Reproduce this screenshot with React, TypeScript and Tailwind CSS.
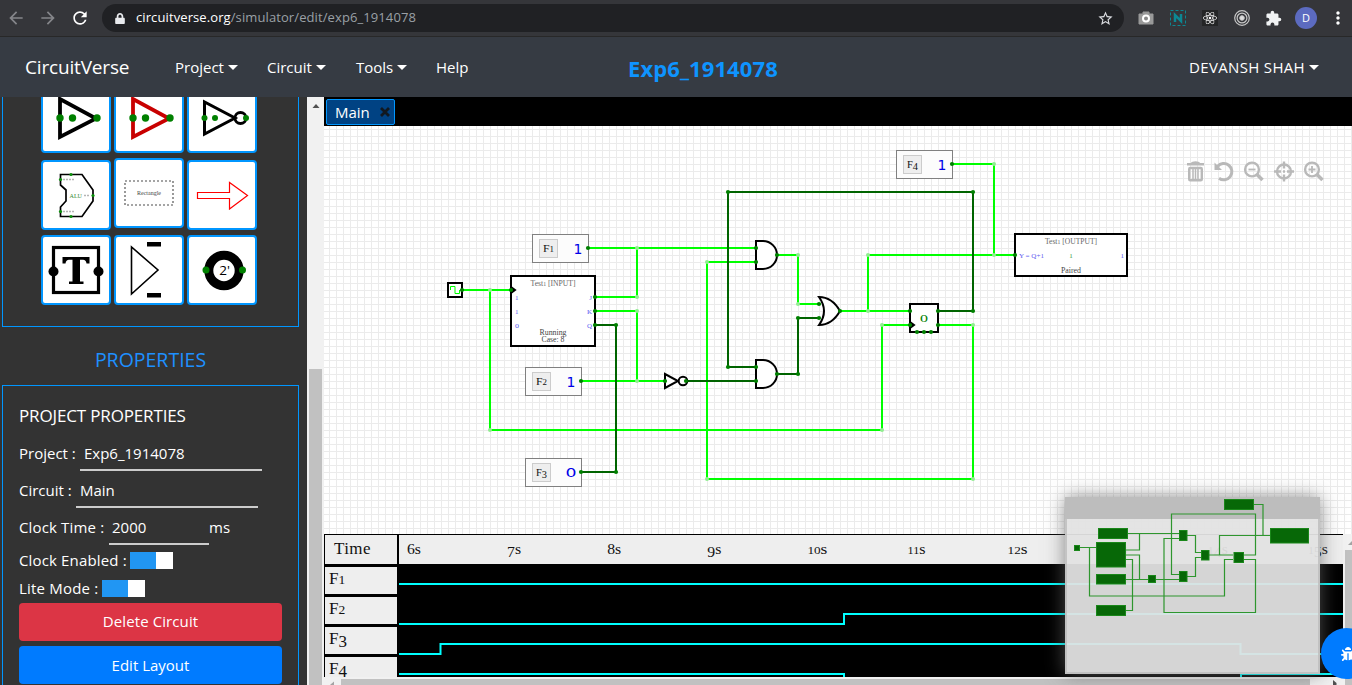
import React from "react";
import { FaBug, FaLock, FaReact } from "react-icons/fa";
import { MdArrowBack, MdArrowForward, MdExtension, MdRefresh, MdStarBorder, MdMoreVert } from "react-icons/md";

const SMALL = "012";
const LOW = "34579";

/* Old-style figures for SVG text: 0-2 at x-height, 3/4/5/7/9 below the baseline. */
function Num({ x, y, size, text, fill = "#111", width, anchor = "start" }: {
  x: number; y: number; size: number; text: string; fill?: string; width?: number; anchor?: "start" | "middle" | "end";
}) {
  let shift = 0;
  return (
    <text x={x} y={y} fontSize={size} fill={fill} textAnchor={anchor} textLength={width} lengthAdjust="spacingAndGlyphs" className="font-['Liberation_Serif',serif]">
      {text.split("").map((c, i) => {
        const want = LOW.includes(c) ? size * 0.2 : 0;
        const dy = want - shift;
        shift = want;
        return <tspan key={i} dy={dy} fontSize={SMALL.includes(c) ? size * 0.76 : size}>{c}</tspan>;
      })}
    </text>
  );
}

const HIGH = "#00ff00";
const OFF = "#006400";

const wires: [string, string][] = [
  [HIGH, "M588 248H756"], [HIGH, "M637 248V297H595"], [HIGH, "M462 290H512"],
  [HIGH, "M490 290V430H882V325H910"], [HIGH, "M595 311H637V381"], [HIGH, "M581 381H665"],
  [HIGH, "M756 262H707V479H973V325H938"], [HIGH, "M777 255H798V304H819"],
  [HIGH, "M840 311H910"], [HIGH, "M868 311V255H1015"], [HIGH, "M952 164H994V255"],
  [OFF, "M595 325H616V472H581"], [OFF, "M686 381H756"], [OFF, "M756 367H728V192H973V311H938"],
  [OFF, "M777 374H798V318H819"],
];
const lightDots = [[637, 248], [637, 297], [637, 311], [637, 381], [490, 290], [490, 430], [882, 430], [882, 325], [707, 262], [707, 479], [973, 479], [973, 325], [798, 255], [798, 304], [868, 311], [868, 255], [994, 255], [994, 164]];
const darkDots = [[588, 248], [462, 290], [511, 290], [595, 297], [595, 311], [595, 325], [616, 325], [616, 472], [581, 472], [581, 381], [665, 381], [686, 381], [756, 248], [756, 262], [777, 255], [756, 367], [756, 381], [777, 374], [798, 374], [798, 318], [819, 304], [819, 318], [840, 311], [728, 192], [728, 367], [973, 192], [973, 311], [910, 311], [910, 325], [938, 311], [938, 325], [952, 164], [1015, 255], [917, 332], [924, 332], [931, 332]];

function InputBox({ x, y, name, value }: { x: number; y: number; name: string; value: string }) {
  return (
    <g>
      <rect x={x + 0.5} y={y + 0.5} width="56" height="28" fill="#fcfcfc" stroke="#808080" />
      <rect x={x + 7.5} y={y + 5.5} width="18" height="18" fill="#eee" stroke="#ccc" />
      <Num x={x + 16.5} y={y + 18} size={10} text={name} anchor="middle" width={11} />
      {value === "1" ? (
        <text x={x + 46} y={y + 20} fontSize="14" textAnchor="middle" fill="#0000e8" className="font-['DejaVu_Sans',sans-serif]">1</text>
      ) : (
        <text x={x + 46} y={y + 19} fontSize="12.5" textAnchor="middle" fill="#0000e8" textLength="11" lengthAdjust="spacingAndGlyphs" className="font-['DejaVu_Sans',sans-serif]">0</text>
      )}
    </g>
  );
}

function Circuit() {
  return (
    <svg className="block h-[408px] w-[1028px]" viewBox="324 126 1028 408">
      <defs>
        <pattern id="grid" x="0" y="3" width="7" height="7" patternUnits="userSpaceOnUse">
          <path d="M0 .5H7M.5 0V7" stroke="#ebebeb" fill="none" />
        </pattern>
      </defs>
      <rect x="324" y="126" width="1028" height="408" fill="#fff" />
      <rect x="324" y="126" width="1028" height="408" fill="url(#grid)" />
      <InputBox x={532} y={234} name="F1" value="1" />
      <InputBox x={525} y={367} name="F2" value="1" />
      <InputBox x={525} y={458} name="F3" value="0" />
      <InputBox x={896} y={150} name="F4" value="1" />
      {wires.map(([c, d]) => <path key={d} d={d} stroke={c} strokeWidth="2" fill="none" />)}
      <g stroke="#000" strokeWidth="2" fill="#fff">
        <rect x="511" y="276" width="84" height="70" />
        <rect x="448" y="283" width="14" height="14" />
        <rect x="1015" y="234" width="112" height="42" />
        <path d="M756 241H763A14 14 0 0 1 763 269H756Z" />
        <path d="M756 360H763A14 14 0 0 1 763 388H756Z" />
        <path d="M819 297Q832 297 840 311Q832 325 819 325Q829 311 819 297Z" />
        <rect x="910" y="304" width="28" height="28" />
        <path d="M665 374V388L678 381Z" />
        <circle cx="683" cy="381" r="4.3" />
        <path d="M511 287L515 290L511 293M910 322L914 325L910 328" fill="#000" />
      </g>
      <path d="M450.500 290V286.500H455V293.500H459.500V290" stroke={HIGH} fill="none" />
      {lightDots.map(([x, y]) => <circle key={`${x}-${y}`} cx={x} cy={y} r="2" fill="#90ee90" />)}
      {darkDots.map(([x, y]) => <circle key={`${x}-${y}`} cx={x} cy={y} r="2.1" fill="#008000" />)}
      <Num x={553} y={286} size={7.6} text="Test1 [INPUT]" anchor="middle" fill="#666" width={45} />
      <text x="553" y="335" fontSize="7.6" textAnchor="middle" fill="#444" textLength="27" lengthAdjust="spacingAndGlyphs" className="font-['Liberation_Serif',serif]">Running</text>
      <text x="553" y="342" fontSize="7.6" textAnchor="middle" fill="#444" textLength="23" lengthAdjust="spacingAndGlyphs" className="font-['Liberation_Serif',serif]">Case: 8</text>
      <g fontSize="7" fill="#5a5af0" className="font-['Liberation_Serif',serif]">
        <text x="515" y="300">1</text><text x="515" y="314">1</text><text x="515" y="328" fontSize="6" textLength="4" lengthAdjust="spacingAndGlyphs">0</text>
        <text x="592" y="300" textAnchor="end">J</text><text x="592" y="314" textAnchor="end">K</text><text x="592" y="328" textAnchor="end">Q</text>
        <text x="1019" y="258" textLength="25" lengthAdjust="spacingAndGlyphs">Y = Q+1</text><text x="1124" y="258" textAnchor="end">1</text>
        <text x="1071" y="258" textAnchor="middle" fill="#449944">1</text>
      </g>
      <Num x={1071} y={244} size={7.6} text="Test1 [OUTPUT]" anchor="middle" fill="#666" width={52} />
      <text x="1071" y="273" fontSize="7.6" textAnchor="middle" fill="#444" textLength="20" lengthAdjust="spacingAndGlyphs" className="font-['Liberation_Serif',serif]">Paired</text>
      <text x="924" y="322" fontSize="10" textAnchor="middle" fill="#008000" textLength="8" lengthAdjust="spacingAndGlyphs" className="font-['Liberation_Serif',serif]">0</text>
      <g stroke="#b9b9b9" strokeWidth="2.4" fill="none">
        <path d="M1187 164.2H1204M1192 163.4Q1192.500 162.400 1195.500 162.400Q1198.500 162.400 1199 163.400" />
        <rect x="1189.200" y="168" width="12.600" height="12.200" rx="1" />
        <path d="M1193 169V180M1195.500 169V180M1198 169V180" strokeWidth="1.500" />
        <path d="M1217.500 166.500A8.100 8.100 0 1 1 1219 178.200" strokeWidth="3" />
        <path d="M1214.500 162.500V170H1222Z" fill="#b9b9b9" stroke="none" />
        <circle cx="1252" cy="169.500" r="6.900" /><path d="M1257.200 174.700L1262.500 180" strokeWidth="3.500" /><path d="M1248.500 169.500H1255.500" strokeWidth="1.800" />
        <circle cx="1284" cy="171.500" r="7" /><path d="M1274 171.500H1281M1287 171.500H1294M1284 161.500V168.500M1284 174.500V181.500M1283 171.500H1285" />
        <circle cx="1312" cy="169.500" r="6.900" /><path d="M1317.200 174.700L1322.500 180" strokeWidth="3.500" /><path d="M1308.500 169.500H1315.500M1312 166V173" strokeWidth="1.800" />
      </g>
    </svg>
  );
}

function Tile({ children, up }: { children: React.ReactNode; up?: boolean }) {
  return (
    <div className={`h-[70px] w-[70px] overflow-hidden rounded border-2 border-[#0096ff] bg-white ${up ? "-mt-[2px]" : ""}`}>
      <svg className="block h-[66px] w-[66px]" viewBox="0 0 66 66">{children}</svg>
    </div>
  );
}

function Palette() {
  return (
    <div className="mx-[2px] -mt-[15px] h-[245px] w-[297px] shrink-0 border border-[#0096ff] pl-[38px]">
      <div className="grid w-[216px] grid-cols-[70px_70px_70px] gap-x-[3px]">
        <div className="h-[76px]"><Tile>
          <path d="M17 14V52L53 33.500Z" fill="none" stroke="#000" strokeWidth="3.800" />
          <circle cx="17" cy="33" r="3.700" fill="#008000" /><circle cx="29.500" cy="33" r="3.700" fill="#008000" /><circle cx="54" cy="33" r="3.700" fill="#008000" />
        </Tile></div>
        <Tile>
          <path d="M17 14V52L53 33.500Z" fill="none" stroke="#c80000" strokeWidth="3.800" />
          <circle cx="17" cy="33" r="3.700" fill="#008000" /><circle cx="29.500" cy="33" r="3.700" fill="#008000" /><circle cx="54" cy="33" r="3.700" fill="#008000" />
        </Tile>
        <Tile>
          <path d="M15.500 17V49L46 33Z" fill="none" stroke="#000" strokeWidth="3" />
          <circle cx="51.500" cy="33" r="5.500" fill="none" stroke="#000" strokeWidth="2.800" />
          <circle cx="15.500" cy="33" r="3" fill="#008000" /><circle cx="26" cy="33" r="3" fill="#008000" /><circle cx="57" cy="33" r="3" fill="#008000" />
        </Tile>
        <div className="mt-[1px] h-[75px]"><Tile>
          <path d="M17.500 12.500H39L50 28V39L39 54.500H17.500V45L23 39V28L17.500 23Z" fill="none" stroke="#000" strokeWidth="1.700" />
          <text x="26.500" y="36" fontSize="6" fill="#338833" textLength="12.500" lengthAdjust="spacingAndGlyphs" className="font-['Liberation_Serif',serif]">ALU</text>
          <path d="M20 17.500H31M20 49.500H31M41 33.500H47" stroke="#b5b5b5" strokeWidth="1.300" strokeDasharray="2 1" />
          {[[28, 12.500], [17.500, 17.500], [50, 33.500], [17.500, 49.500], [28, 54.500]].map(([x, y]) => <circle key={`${x}${y}`} cx={x} cy={y} r="1.600" fill="#0a900a" />)}
        </Tile></div>
        <div className="mt-[1px]"><Tile up>
          <rect x="9" y="21" width="48" height="24" fill="none" stroke="#888" strokeWidth="1.700" strokeDasharray="2 2" />
          <text x="33" y="35" fontSize="6" textAnchor="middle" fill="#444" textLength="24" lengthAdjust="spacingAndGlyphs" className="font-['Liberation_Serif',serif]">Rectangle</text>
        </Tile></div>
        <div className="mt-[1px]"><Tile><path d="M8.500 30.500H40.500V20.500L58.500 33.500L40.500 47V36.500H8.500Z" fill="none" stroke="#ff0000" strokeWidth="1.200" /></Tile></div>
        <Tile>
          <rect x="10.500" y="10.500" width="45" height="45" fill="none" stroke="#000" strokeWidth="3.200" />
          <path d="M19.500 20H46.500V26.500H43.500Q43 22.800 40 22.800H37V44.500H40.500V47H26V44.500H29.500V22.800H26Q23 22.800 22.500 26.500H19.500Z" />
          <circle cx="10.500" cy="34.500" r="5" /><circle cx="55.500" cy="34.500" r="5" />
        </Tile>
        <Tile>
          <path d="M15.500 10V57L42 33Z" fill="none" stroke="#000" strokeWidth="1.600" />
          <path d="M31 5H45V9.500H31ZM31 56H45V60.500H31Z" />
        </Tile>
        <Tile>
          <circle cx="35" cy="33.500" r="15.200" fill="#fff" stroke="#000" strokeWidth="9" />
          <circle cx="17" cy="33" r="3.500" fill="#008000" /><circle cx="53.500" cy="33" r="3.500" fill="#008000" />
          <text x="35.500" y="38" fontSize="13.500" textAnchor="middle" className="font-['Open_Sans',sans-serif]">2'</text>
        </Tile>
      </div>
    </div>
  );
}

function Toggle() {
  return <span className="ml-1 flex h-[17px] w-[43px] bg-[#2196f3]"><span className="ml-auto h-[17px] w-[17px] bg-white" /></span>;
}

function Sidebar() {
  return (
    <aside className="flex h-[588px] w-[307px] shrink-0 flex-col overflow-hidden bg-[#333] text-[15px] text-white">
      <Palette />
      <h2 className="mt-[18px] h-[40px] w-[301px] shrink-0 text-center text-[19.5px] leading-[30px] text-[#1e90ff]">PROPERTIES</h2>
      <div className="mx-[2px] h-[320px] w-[297px] shrink-0 border border-[#0096ff] pl-4">
        <h3 className="mt-[18px] h-[24px] text-[17px] leading-6 tracking-[-0.15px]">PROJECT PROPERTIES</h3>
        <div className="mt-[9px] flex h-[34px] items-stretch leading-[33px]">Project :<span className="ml-auto mr-[36px] w-[182px] border-b-2 border-[#ccc] pl-1">Exp6_1914078</span></div>
        <div className="mt-[3px] flex h-[34px] leading-[33px]">Circuit :<span className="ml-auto mr-[40px] w-[182px] border-b-2 border-[#ccc] pl-1">Main</span></div>
        <div className="mt-[3px] flex h-[34px] leading-[33px]"><span className="w-[90px] tracking-[0.15px]">Clock Time :</span><span className="w-[100px] border-b-2 border-[#ccc] pl-[3px]">2000</span>ms</div>
        <div className="mt-[1px] flex h-7 items-center leading-7"><span className="w-[107px] whitespace-nowrap tracking-[0.15px]">Clock Enabled :</span><Toggle /></div>
        <div className="flex h-7 items-center leading-7"><span className="w-[79px] whitespace-nowrap tracking-[0.2px]">Lite Mode :</span><Toggle /></div>
        <button className="mt-[1px] block h-[38px] w-[263px] rounded bg-[#dc3545] pb-[1px] tracking-[0.1px]">Delete Circuit</button>
        <button className="mt-[5px] block h-[38px] w-[263px] rounded bg-[#007bff]">Edit Layout</button>
      </div>
    </aside>
  );
}

function SideScroll() {
  return (
    <div className="flex w-[17px] shrink-0 flex-col items-center bg-[#f1f1f1]">
      <svg className="mt-[6px] h-[6px] w-[8px]" viewBox="0 0 8 6"><path d="M0.500 5H7.500L4 1Z" fill="#505050" /></svg>
      <div className="mt-[260px] w-[13px] flex-1 bg-[#c1c1c1]" />
    </div>
  );
}

function Signal({ name }: { name: string }) {
  const digit = name[1];
  return (
    <div className="mb-[3px] h-[27px] w-[72px] bg-[#eee] pl-[4px] leading-[23px]">
      F<span className={digit < "3" ? "text-[13.5px]" : "align-[-3px]"}>{digit}</span>
    </div>
  );
}

function Timing() {
  return (
    <div className="flex h-[151px] w-[1028px] overflow-hidden">
      <div className="h-[151px] w-[1019px]">
        <div className="flex h-[143px] overflow-hidden bg-black pl-px pt-px">
          <div className="w-[74px] shrink-0 font-['Liberation_Serif',serif] text-[17px] text-[#111]">
            <div className="mb-[3px] h-[29px] w-[72px] bg-[#eee] pl-[9px] leading-[27px] tracking-[0.4px]">Time</div>
            <Signal name="F1" /><Signal name="F2" /><Signal name="F3" /><Signal name="F4" />
          </div>
          <svg className="block h-[142px] w-[944px]" viewBox="399 535 944 142">
            <rect x="399" y="535" width="944" height="29" fill="#eee" />
            {[6, 7, 8, 9, 10, 11, 12, 13, 14, 15].map((n, i) => (
              <Num key={n} x={407 + i * 100.100} y={554} size={15} text={`${n}s`} width={n > 9 ? (n === 11 ? 18 : 20) : 14} />
            ))}
            <path d="M399 584H1343M399 624H844V614H1343M399 654H440.500V644H1240.500V654H1343M399 674H844V684M1241 684V674H1343" fill="none" stroke="#00ffff" strokeWidth="2" />
          </svg>
        </div>
        <div className="flex h-2 bg-[#f1f1f1] pt-[2px]">
          <svg className="h-[6px] w-[17px]" viewBox="0 0 17 6"><path d="M6 6L10 2.500V6Z" fill="#a3a3a3" /></svg>
          <div className="w-[969px] bg-[#c1c1c1]" />
          <svg className="ml-[22px] h-[6px] w-[6px]" viewBox="0 0 6 6"><path d="M1 1L4.500 4V6H1Z" fill="#505050" /></svg>
        </div>
      </div>
      <div className="w-[9px] bg-[#f1f1f1]">
        <svg className="mt-[6px] h-[6px] w-[9px]" viewBox="0 0 9 6"><path d="M5 5H9V1Z" fill="#a3a3a3" /></svg>
        <div className="ml-[2px] mt-[4px] h-[135px] bg-[#c1c1c1]" />
      </div>
    </div>
  );
}

const mapBoxes = [[1224.5, 499.5, 29, 10], [1098.5, 528.5, 29, 10], [1096.5, 542.5, 29, 24.5], [1096.5, 574.5, 29, 9.5], [1096.5, 605.5, 29, 10], [1074.5, 545.5, 5, 5], [1179.5, 530.5, 7.5, 10], [1179.5, 571.5, 7.5, 10], [1201.5, 550.5, 7.5, 9.5], [1148.5, 575.5, 7, 7], [1234, 552.5, 9.500, 10], [1270.5, 528.5, 38, 14.500]];

function MiniMap() {
  return (
    <div className="absolute left-[1065px] top-[497px] h-[177px] w-[255px] border-2 border-t-0 border-[#bbbbbb]/80 bg-[#e2e2e2]/94 shadow-[0_0_18px_rgba(100,100,100,0.75)]">
      <div className="-mx-[2px] h-[22px] bg-[#bdbdbd]" />
      <svg className="absolute -left-[2px] top-0 h-[177px] w-[255px]" viewBox="1065 497 255 177">
        <g stroke="#2e962e" strokeWidth="1.200" fill="none">
          <path d="M1080 547.500H1096M1089.500 547.500V596H1224.500V559.500H1233M1128 533.500H1179M1139.500 533.500V550H1126M1126 555H1139.500V579M1126 579.500H1148M1156 579.500H1179M1126 559.500H1132.500V610.500H1126M1179 574.500H1171.500V514H1255.500V555H1244M1179 538.500H1164V612.500H1255.500V559.500H1244M1187 535.500H1195.500V552.500H1201M1187 576.500H1195.500V557.500H1201M1209 555H1233M1219.500 555V535.500H1270M1254 504.500H1263V535.500" />
        </g>
        {mapBoxes.map(([x, y, w, h]) => <rect key={`${x}${y}`} x={x} y={y} width={w} height={h} fill="#076807" stroke="#1a871a" />)}
      </svg>
    </div>
  );
}

function Caret() {
  return <svg className="ml-1 h-[5px] w-[10px]" viewBox="0 0 10 5"><path d="M0 0H10L5 5Z" fill="#fff" /></svg>;
}

function Browser() {
  return (
    <div className="flex h-[37px] items-center border-b border-[#282828] bg-[#35363a]">
      <MdArrowBack className="ml-[6px] h-[20px] w-[20px] text-[#85868a]" />
      <MdArrowForward className="ml-[12px] h-[20px] w-[20px] text-[#85868a]" />
      <MdRefresh className="ml-[12px] h-[20px] w-[20px] text-white" />
      <div className="ml-[12px] flex h-7 w-[1022px] items-center rounded-full bg-[#202124] text-[13px] text-[#9aa0a6]">
        <FaLock className="ml-[13px] h-[11px] w-[10px] text-[#e8eaed]" />
        <span className="ml-[11px] tracking-[0.1px]"><span className="text-white">circuitverse.org</span>/simulator/edit/exp6_1914078</span>
        <MdStarBorder className="ml-auto mr-[10px] h-[17px] w-[17px] text-[#dadce0]" />
      </div>
      <svg className="ml-[14px] h-[14px] w-[16px]" viewBox="0 0 16 14"><path d="M1 3H5V1H11V3H15V13H1Z" fill="#999" stroke="#999" strokeLinejoin="round" /><circle cx="8" cy="7.500" r="3" stroke="#fff" strokeWidth="2" fill="#888" /></svg>
      <svg className="ml-[16px] h-[16px] w-[16px]" viewBox="0 0 16 16"><path d="M0.500 0.500H15.500V15.500H0.500Z" fill="none" stroke="#0c8793" strokeDasharray="3 2" /><path d="M5 12V5L11 11V4" fill="none" stroke="#0c8793" strokeWidth="2.500" /></svg>
      <span className="ml-[16px] flex h-[16px] w-[16px] items-center justify-center bg-[#242526]"><FaReact className="h-[14px] w-[14px] text-white" /></span>
      <svg className="ml-[16px] h-[16px] w-[16px]" viewBox="0 0 16 16" fill="none" stroke="#c8c8c8"><circle cx="8" cy="8" r="7.300" strokeWidth="1.200" /><circle cx="8" cy="8" r="4.900" strokeWidth="1.200" /><circle cx="8" cy="8" r="2.300" fill="#ddd" /></svg>
      <MdExtension className="ml-[15px] h-[17px] w-[17px] text-[#f1f3f4]" />
      <span className="ml-[13px] flex h-[22px] w-[22px] items-center justify-center rounded-full bg-[#5c6bc0] text-[11px] text-white">D</span>
      <MdMoreVert className="ml-[11px] h-[20px] w-[20px] shrink-0 text-white" />
    </div>
  );
}

function Nav() {
  return (
    <nav className="flex h-[60px] items-center bg-[#363b43] text-[15px] text-white">
      <span className="ml-[25px] w-[150px] text-[19px] leading-[60px] tracking-[-0.17px]">CircuitVerse</span>
      <span className="flex w-[92px] items-center">Project<Caret /></span>
      <span className="flex w-[89px] items-center">Circuit<Caret /></span>
      <span className="flex w-[80px] items-center">Tools<Caret /></span>
      <span className="w-[192px]">Help</span>
      <span className="pt-[2px] text-[22px] font-bold tracking-[0.1px] text-[#0e94ff]">Exp6_1914078</span>
      <span className="ml-auto mr-[33px] flex items-center tracking-[0.33px]">DEVANSH SHAH<Caret /></span>
    </nav>
  );
}

export default function App() {
  return (
    <div className="relative h-[685px] w-[1352px] overflow-hidden bg-[#333] font-['Open_Sans',sans-serif]">
      <Browser />
      <Nav />
      <div className="flex h-[588px]">
        <Sidebar />
        <SideScroll />
        <main className="w-[1028px]">
          <div className="h-[29px] bg-black pl-[2px] pt-[2px]">
            <div className="flex h-[26px] w-[69px] items-center rounded-[2px] border border-[#0096ff] bg-[#004283] pl-2 text-[15px] text-white">
              Main<svg className="ml-auto mr-[4px] h-[10px] w-[10px]" viewBox="0 0 10 10"><path d="M1 1L9 9M9 1L1 9" stroke="#111820" strokeWidth="2.800" /></svg>
            </div>
          </div>
          <Circuit />
          <Timing />
        </main>
      </div>
      <MiniMap />
      <div className="absolute left-[1321px] top-[628px] flex h-[51px] w-[51px] items-center justify-center rounded-full bg-[#007bff]"><FaBug className="ml-[3px] h-[14px] w-[14px] text-white" /></div>
    </div>
  );
}
